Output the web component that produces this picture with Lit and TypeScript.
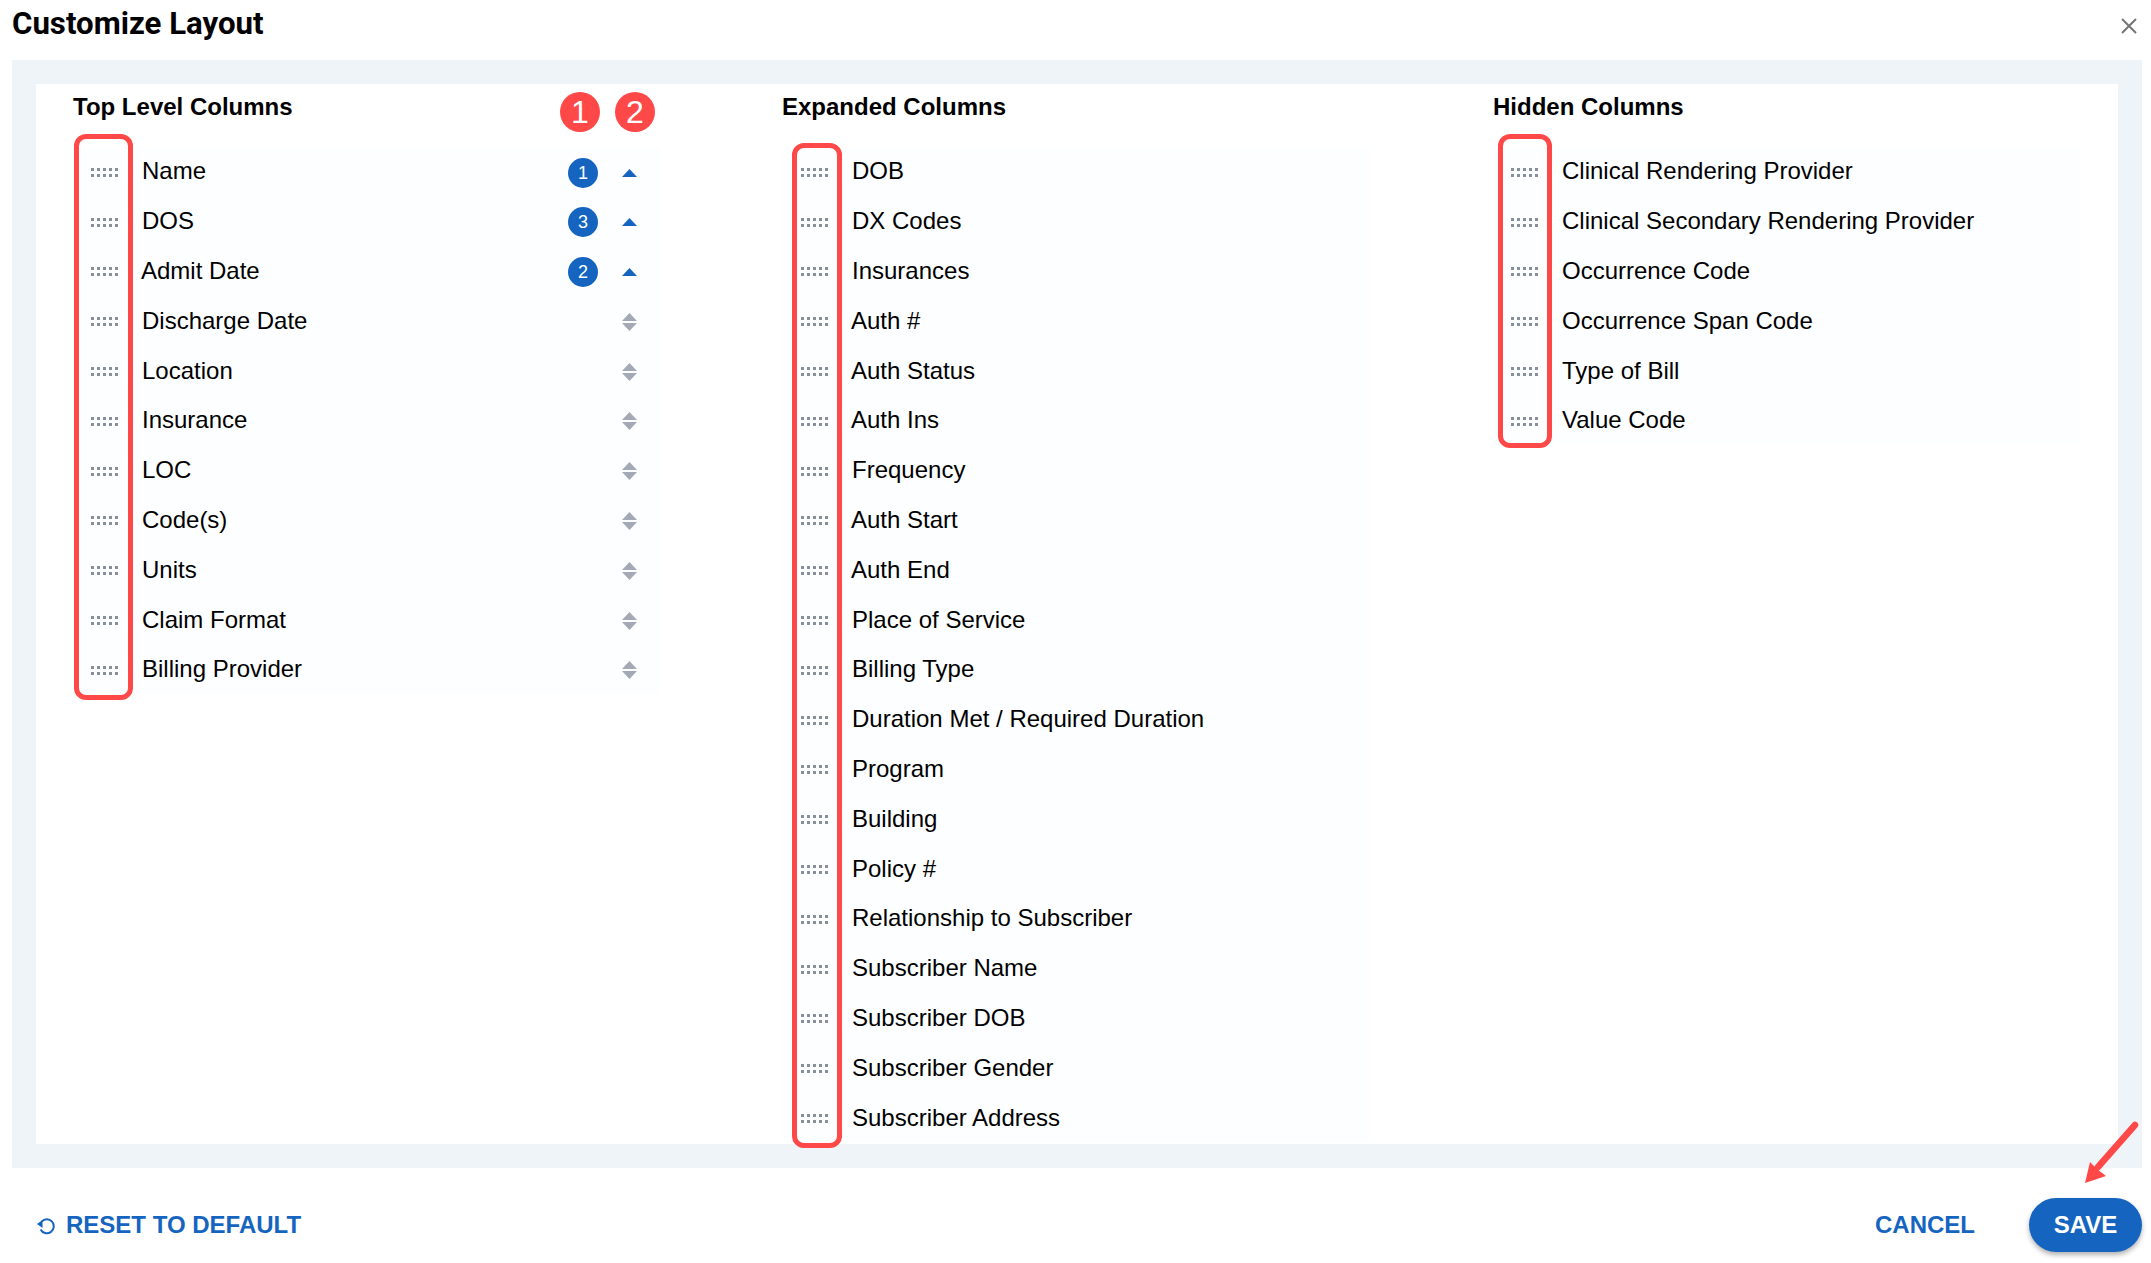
import { LitElement, html, css, svg } from "lit";
import { customElement } from "lit/decorators.js";
import { classMap } from "lit/directives/class-map.js";

type Row = { label: string; order?: number; sort?: "up" | "none" };

const TOP: Row[] = [
  { label: "Name", order: 1, sort: "up" },
  { label: "DOS", order: 3, sort: "up" },
  { label: "Admit Date", order: 2, sort: "up" },
  ...["Discharge Date", "Location", "Insurance", "LOC", "Code(s)", "Units", "Claim Format", "Billing Provider"].map(
    (label) => ({ label, sort: "none" as const })
  ),
];
const EXPANDED: Row[] = [
  "DOB", "DX Codes", "Insurances", "Auth #", "Auth Status", "Auth Ins", "Frequency", "Auth Start", "Auth End",
  "Place of Service", "Billing Type", "Duration Met / Required Duration", "Program", "Building", "Policy #",
  "Relationship to Subscriber", "Subscriber Name", "Subscriber DOB", "Subscriber Gender", "Subscriber Address",
].map((label) => ({ label }));
const HIDDEN: Row[] = [
  "Clinical Rendering Provider", "Clinical Secondary Rendering Provider", "Occurrence Code", "Occurrence Span Code",
  "Type of Bill", "Value Code",
].map((label) => ({ label }));

const grip = () => html`<svg class="grip" width="28" height="9" viewBox="0 0 28 9" aria-hidden="true">
  ${[0, 6, 12, 18, 24].map((x) => [0, 6].map((y) => svg`<rect x=${x} y=${y} width="3" height="3" fill="#87909a"></rect>`))}
</svg>`;

const sortIcon = (kind?: string) =>
  kind === "up"
    ? html`<svg class="sort up" width="15" height="20" viewBox="0 0 15 20" aria-hidden="true"><path d="M0 9 7.5 1 15 9z" fill="#1565c0"></path></svg>`
    : html`<svg class="sort both" width="15" height="20" viewBox="0 0 15 20" aria-hidden="true"><path d="M0 9 7.5 1 15 9z M0 11 15 11 7.5 19z" fill="#a3a9b5"></path></svg>`;

@customElement("app-root")
export class AppRoot extends LitElement {
  static styles = css`
    :host {
      display: block;
      width: 2151px;
      height: 1263px;
      background: #fff;
      font-family: "Liberation Sans", Arial, sans-serif;
      color: #000;
      overflow: hidden;
      position: relative;
    }
    .head {
      height: 60px;
      display: flex;
      align-items: flex-start;
      justify-content: space-between;
      padding: 6px 14px 0 12px;
      box-sizing: border-box;
    }
    h1 {
      margin: 0;
      font: 700 31.2px/36px Roboto, sans-serif;
    }
    .close {
      margin-top: 12px;
      display: block;
    }
    .panel {
      margin: 0 9px 0 12px;
      height: 1108px;
      box-sizing: border-box;
      padding: 24px;
      background: #eff4f9;
    }
    .inner {
      height: 1060px;
      background: #fff;
      box-sizing: border-box;
      padding: 0 0 0 37px;
      display: grid;
      grid-template-columns: 709px 711px 1fr;
    }
    .col-head {
      height: 46px;
      display: flex;
      align-items: flex-start;
      position: relative;
    }
    h2 {
      margin: 0;
      padding-top: 9px;
      font: 700 24px/28px "Liberation Sans", Arial, sans-serif;
    }
    .marks {
      position: absolute;
      left: 487px;
      top: 8px;
      display: flex;
      gap: 15px;
    }
    .mark {
      width: 40px;
      height: 40px;
      border-radius: 50%;
      background: #ff4848;
      color: #fff;
      font-size: 32px;
      line-height: 40px;
      text-align: center;
    }
    .list {
      position: relative;
      margin: 0;
      list-style: none;
      width: 588px;
      padding: 16.5px 0 0;
    }
    .row {
      height: 49.8px;
      display: flex;
      align-items: center;
      background: #fdfeff;
      position: relative;
    }
    .grip {
      margin: 2px 0 0 18px;
      flex: none;
    }
    .mid .grip {
      margin-left: 19px;
    }
    .label {
      margin-left: 23px;
      font-size: 24px;
      white-space: nowrap;
    }
    .label.a {
      margin-left: 22px;
    }
    .order {
      position: absolute;
      left: 495px;
      top: 11px;
      width: 30px;
      height: 30px;
      border-radius: 50%;
      background: #1565c0;
      color: #fff;
      font-size: 18px;
      line-height: 30px;
      text-align: center;
    }
    .sort {
      position: absolute;
      left: 549px;
    }
    .sort.up {
      top: 21px;
    }
    .sort.both {
      top: 16px;
    }
    .box {
      position: absolute;
      box-sizing: border-box;
      border: 5px solid #ff4848;
      border-radius: 12px;
      pointer-events: none;
    }
    .box.top {
      left: 1px;
      top: 4px;
      width: 59px;
      height: 566px;
    }
    .box.exp {
      left: 10px;
      top: 13px;
      width: 50px;
      height: 1005px;
    }
    .box.hid {
      left: 5px;
      top: 4px;
      width: 54px;
      height: 314px;
    }
    .foot {
      height: 95px;
      display: flex;
      align-items: center;
      padding: 19px 9px 0 37px;
      box-sizing: border-box;
      font-weight: 700;
      font-size: 24px;
      color: #1565c0;
    }
    .reset {
      display: flex;
      align-items: center;
      gap: 10px;
    }
    .reset svg {
      margin-top: 2px;
    }
    .cancel {
      margin-left: auto;
      margin-right: 54px;
    }
    .save {
      width: 113px;
      height: 54px;
      border-radius: 27px;
      background: #1565c0;
      color: #fff;
      display: flex;
      align-items: center;
      justify-content: center;
      box-shadow: 0 3px 5px rgba(0, 0, 0, 0.3);
    }
    .arrow {
      position: absolute;
      left: 2080px;
      top: 1118px;
    }
  `;

  private list(rows: Row[], box: string, cls: string) {
    return html`<ul class="list ${cls}">
      ${rows.map(
        (r) => html`<li class="row">
          ${grip()}<span class=${classMap({ label: true, a: r.label.startsWith("A") })}>${r.label}</span>
          ${r.order ? html`<span class="order">${r.order}</span>` : null}
          ${r.sort ? sortIcon(r.sort) : null}
        </li>`
      )}
      <div class="box ${box}"></div>
    </ul>`;
  }

  render() {
    return html`
      <div class="head">
        <h1>Customize Layout</h1>
        <svg class="close" width="16" height="16" viewBox="0 0 16 16" aria-hidden="true">
          <path d="M1 1 15 15M15 1 1 15" stroke="#757575" stroke-width="2" fill="none"></path>
        </svg>
      </div>
      <div class="panel">
        <div class="inner">
          <section>
            <div class="col-head">
              <h2>Top Level Columns</h2>
              <div class="marks"><span class="mark">1</span><span class="mark">2</span></div>
            </div>
            ${this.list(TOP, "top", "left")}
          </section>
          <section>
            <div class="col-head"><h2>Expanded Columns</h2></div>
            ${this.list(EXPANDED, "exp", "mid")}
          </section>
          <section>
            <div class="col-head"><h2>Hidden Columns</h2></div>
            ${this.list(HIDDEN, "hid", "right")}
          </section>
        </div>
      </div>
      <div class="foot">
        <span class="reset">
          <svg width="19" height="17" viewBox="0 0 19 17" aria-hidden="true">
            <path d="M4.6 3.6A7 7 0 1 1 3.6 11.5" fill="none" stroke="#1565c0" stroke-width="2"></path>
            <path d="M0 6 5.5 2 5.5 10z" fill="#1565c0"></path>
          </svg>
          RESET TO DEFAULT
        </span>
        <span class="cancel">CANCEL</span>
        <span class="save">SAVE</span>
      </div>
      <svg class="arrow" width="60" height="70" viewBox="0 0 60 70" aria-hidden="true">
        <path d="M55 7 18 49" stroke="#ff4848" stroke-width="6.5" stroke-linecap="round" fill="none"></path>
        <path d="M5 65 10 44 17 51 26 58z" fill="#ff4848"></path>
      </svg>
    `;
  }
}
